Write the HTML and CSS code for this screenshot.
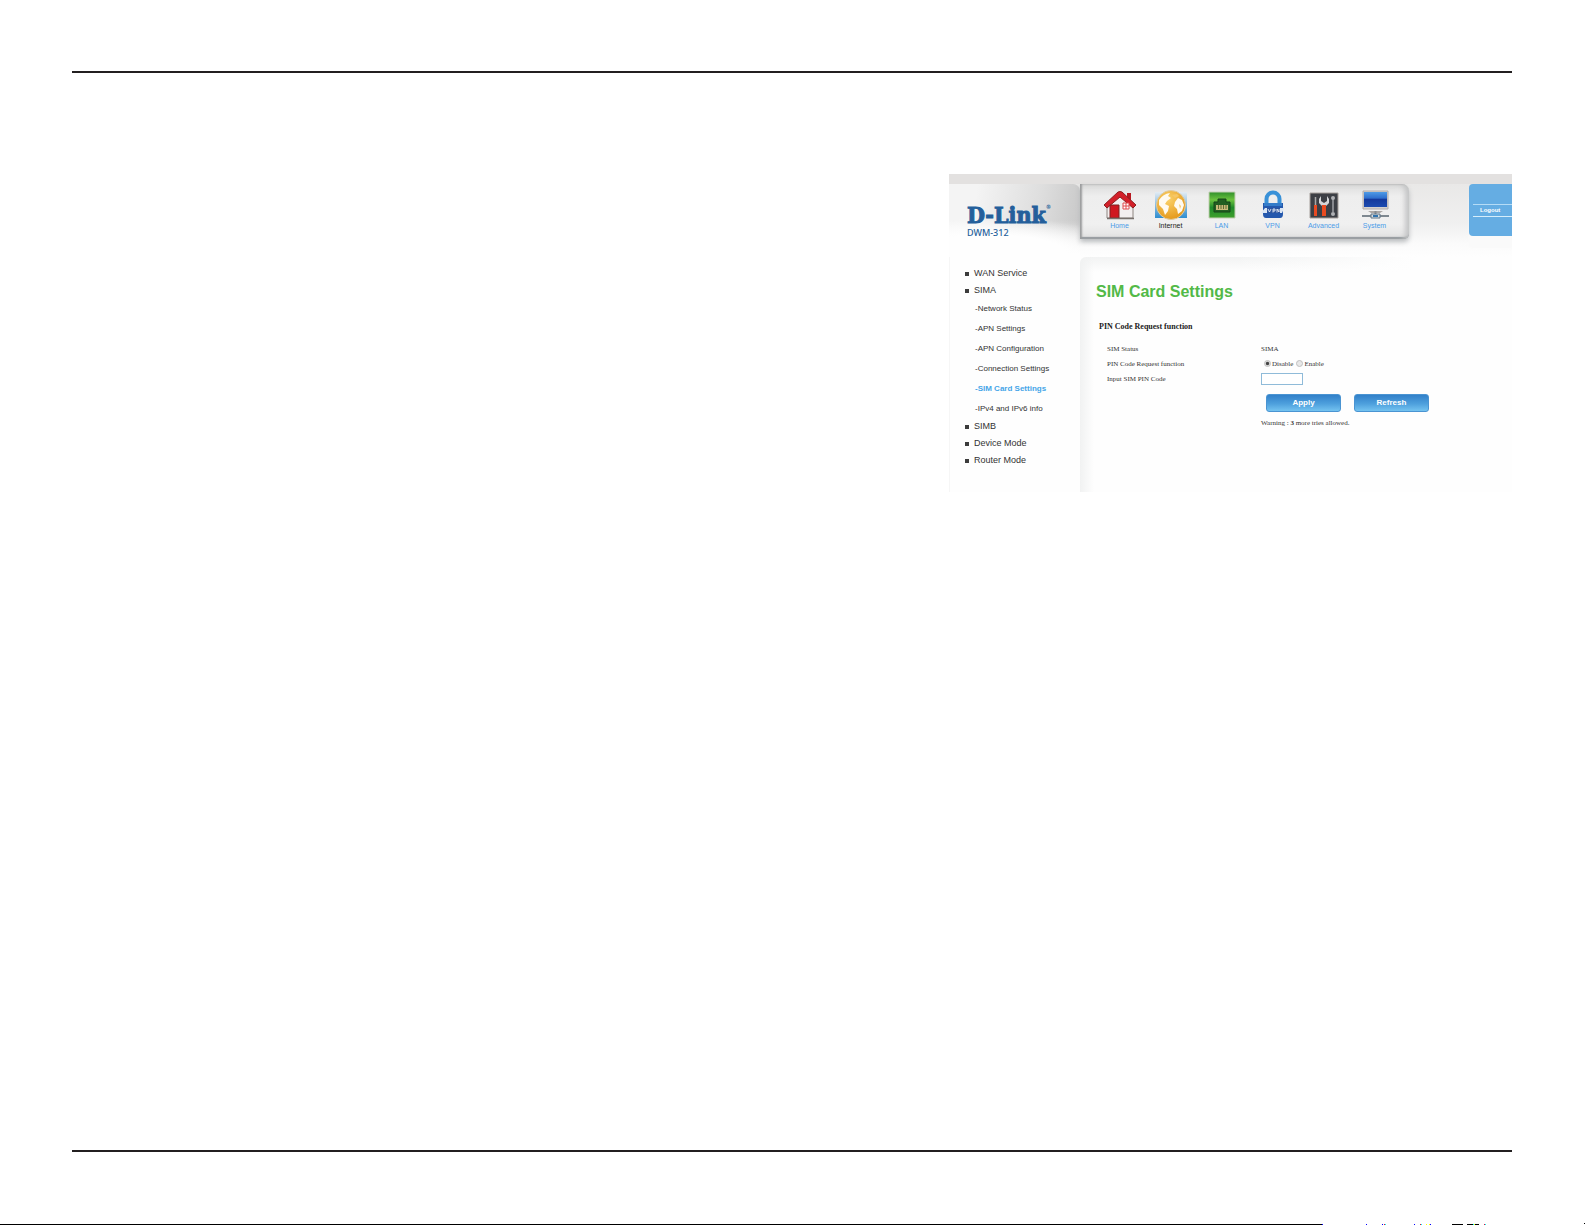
FILE: index.html
```
<!DOCTYPE html>
<html lang="en">
<head>
  <meta charset="UTF-8">
  <meta name="viewport" content="width=device-width, initial-scale=1.0">
  <title>D-Link DWM-312 - SIM Card Settings</title>
  <link rel="stylesheet" href="styles.css">
</head>
<body>
  <div class="page">
    <hr class="rule">

    <main class="sheet">
      <section class="console">
        <header class="header">
          <div class="brand">
            <div class="logo">D-Link<sup>®</sup></div>
            <div class="model">DWM-312</div>
          </div>

          <nav class="topnav">
            <a href="#home">
              <svg viewBox="0 0 34 30">
                <path d="M4 15L17 4l13 11v13H4z" fill="#f3efef" stroke="#8d8580" stroke-width="1"/>
                <path d="M24 3h4v8l-4-3z" fill="#b81820"/>
                <path d="M1 15L15 2q2-1 4 0l14 13-3 3L17 7 4 18z" fill="#d3202a" stroke="#8b2020" stroke-width="1"/>
                <path d="M7 15h9v13H7z" fill="#cf1720" stroke="#7c2222"/>
                <path d="M20 13h6v6h-6zM23 13v6M20 16h6" fill="#fff" stroke="#e04a4e"/>
                <path d="M4 28.500h27" stroke="#77706c" stroke-width="1.500"/>
              </svg>
              Home
            </a>
            <a href="#internet" class="current">
              <svg viewBox="0 0 34 30">
                <defs>
                  <linearGradient id="sky" x1="0" y1="0" x2="0" y2="1">
                    <stop offset="0" stop-color="#e4ecf3"/>
                    <stop offset="1" stop-color="#2f8ed0"/>
                  </linearGradient>
                  <radialGradient id="sea" cx=".4" cy=".3" r=".7">
                    <stop offset="0" stop-color="#fbd26a"/>
                    <stop offset="1" stop-color="#e59a1d"/>
                  </radialGradient>
                </defs>
                <path d="M1 2h32v26H1z" fill="url(#sky)"/>
                <circle cx="17" cy="15" r="14.500" fill="url(#sea)" stroke="#dfcba2"/>
                <path d="M5 10q4-6 11-7l-2 3 3 2-4 3-2 3 4 2-1 5-3 4-2-6-4-4zM21 12l3-4 4 2 2 5-2 6-4 3-1-5-3-3z" fill="#fffaf0"/>
                <path d="M18 5l5-1 2 2-4 2zM25 14l2 2-1 3z" fill="#f7c765"/>
              </svg>
              Internet
            </a>
            <a href="#lan">
              <svg viewBox="0 0 34 30">
                <defs>
                  <linearGradient id="port" x1="0" y1="0" x2="0" y2="1">
                    <stop offset="0" stop-color="#2f8f2a"/>
                    <stop offset=".3" stop-color="#6cc23f"/>
                    <stop offset=".6" stop-color="#1f8a2a"/>
                    <stop offset="1" stop-color="#3fa02c"/>
                  </linearGradient>
                </defs>
                <path d="M4 2h26v26H4z" fill="url(#port)" stroke="#c4cfb4"/>
                <path d="M9 22V12h4V9h8v3h4v10z" fill="#235f22" stroke="#174419"/>
                <path d="M11 15h12v5H11z" fill="#c9ba7a"/>
                <path d="M13.500 15v4M16 15v4M18.500 15v4M21 15v4" stroke="#4a5a24" stroke-width=".8"/>
              </svg>
              LAN
            </a>
            <a href="#vpn">
              <svg viewBox="0 0 34 30">
                <path d="M10.500 14V9a6.500 6.500 0 0 1 13 0v5" fill="none" stroke="#3991d8" stroke-width="4"/>
                <path d="M7 13h20v11q0 4-3 4H10q-3 0-3-4z" fill="#2458ad"/>
                <path d="M8 13h18v3H8z" fill="#347cc9"/>
                <path d="M5 23l4-5h18l2-2-3 7H8z" fill="#dbe6f4"/>
                <path d="M11 18h13v5H11z" fill="#2b55a0"/>
                <path d="M12 19l1.500 3 1.500-3M17 22.500V19h2v2h-2M21 22.500V19l2 3v-3" fill="none" stroke="#fff" stroke-width=".8"/>
              </svg>
              VPN
            </a>
            <a href="#advanced">
              <svg viewBox="0 0 34 30">
                <path d="M3 3h28v25H3z" fill="#3c3f45" stroke="#a6a09c"/>
                <path d="M8.500 7v9" stroke="#a8a8a8" stroke-width="1.500"/>
                <path d="M7 15h3v11H7z" fill="#e84a22"/>
                <path d="M14 6v5l3 2 3-2V6l2 3v4l-3 3h-4l-3-3V9z" fill="#d4d6d8"/>
                <path d="M15 15h4v11h-4z" fill="#ea4b20"/>
                <path d="M26 9v13" stroke="#9fa2a6" stroke-width="1.500"/>
                <circle cx="26" cy="8" r="2" fill="#b0b2b5"/>
                <circle cx="26" cy="24" r="2" fill="#b0b2b5"/>
              </svg>
              Advanced
            </a>
            <a href="#system">
              <svg viewBox="0 0 34 30">
                <defs>
                  <linearGradient id="screen" x1="0" y1="0" x2="0" y2="1">
                    <stop offset="0" stop-color="#4f9be6"/>
                    <stop offset=".4" stop-color="#2f6fce"/>
                    <stop offset=".5" stop-color="#15399c"/>
                    <stop offset="1" stop-color="#1d4bb0"/>
                  </linearGradient>
                </defs>
                <path d="M5 1h25v18H5z" fill="#d3d1cf" stroke="#b5adaa"/>
                <path d="M6 2h23v15H6z" fill="url(#screen)"/>
                <path d="M10 21h15l-3 2h-9z" fill="#aaa6a4"/>
                <path d="M17.500 21v4" stroke="#858a90" stroke-width="2"/>
                <path d="M4 25h27v2H4z" fill="#7e8890"/>
                <path d="M13 24h9v4h-9z" fill="#d7dde0" stroke="#5e7383"/>
                <path d="M15 26h5" stroke="#3173ad" stroke-width="2"/>
              </svg>
              System
            </a>
          </nav>

          <div class="session">
            <a href="#logout">Logout</a>
          </div>
        </header>

        <div class="body">
          <ul class="menu">
            <li><a href="#wan">WAN Service</a></li>
            <li>
              <a href="#sima">SIMA</a>
              <ul class="submenu">
                <li><a href="#network">-Network Status</a></li>
                <li><a href="#apn">-APN Settings</a></li>
                <li><a href="#apn-config">-APN Configuration</a></li>
                <li><a href="#connection">-Connection Settings</a></li>
                <li><a href="#sim" class="active">-SIM Card Settings</a></li>
                <li><a href="#ip">-IPv4 and IPv6 info</a></li>
              </ul>
            </li>
            <li><a href="#simb">SIMB</a></li>
            <li><a href="#device">Device Mode</a></li>
            <li><a href="#router">Router Mode</a></li>
          </ul>

          <div class="content">
            <h1>SIM Card Settings</h1>
            <h2>PIN Code Request function</h2>
            <form class="settings">
              <span>SIM Status</span>
              <span>SIMA</span>

              <span id="pin-label">PIN Code Request function</span>
              <div class="choices" role="radiogroup" aria-labelledby="pin-label">
                <input type="radio" name="pin" id="disable" checked>
                <label for="disable">Disable</label>
                <input type="radio" name="pin" id="enable">
                <label for="enable">Enable</label>
              </div>

              <label for="code">Input SIM PIN Code</label>
              <input type="text" id="code">

              <div class="actions">
                <button type="button">Apply</button>
                <button type="button">Refresh</button>
              </div>
              <p class="warning">Warning : <b>3</b> more tries allowed.</p>
            </form>
          </div>
        </div>
      </section>
    </main>

    <hr class="rule">
  </div>

  <!-- top edge of the next page -->
  <svg class="edge" viewBox="0 0 1585 2" preserveAspectRatio="none" shape-rendering="crispEdges">
    <path d="M0 1h1322v1H0zM1452 1h11v1h-11zM1467 1h12v1h-12zM1584 0h1v1h-1z" fill="#000"/>
    <path d="M1322 1h1v1h-1zM1366 1h1v1h-1zM1382 1h1v1h-1zM1414 1h1v1h-1zM1430 1h1v1h-1z" fill="#00f"/>
    <path d="M1384 1h1v1h-1zM1420 1h1v1h-1zM1484 1h1v1h-1z" fill="#e0103a"/>
    <path d="M1385 1h1v1h-1zM1421 1h1v1h-1zM1485 1h1v1h-1zM1473 1h1v1h-1z" fill="#0ff"/>
    <path d="M1426 1h1v1h-1zM1429 1h1v1h-1zM1474 1h1v1h-1z" fill="#ff0"/>
  </svg>
</body>
</html>
```
FILE: styles.css
```
:root {
  --link-color: #4a9be8;
  --brand-color: #245f9b;
  --title-color: #52b947;
  --text-color: #333333;
}

* {
  box-sizing: border-box;
}

body {
  margin: 0;
  min-height: 100vh;
  display: flex;
  flex-direction: column;
  background-color: #ffffff;
  color: var(--text-color);
  font-family: "Liberation Sans", Arial, sans-serif;
}

a {
  color: inherit;
  text-decoration: none;
}

ul {
  list-style: none;
  margin: 0;
  padding: 0;
}

.page {
  flex: 1;
  display: flex;
  flex-direction: column;
  padding: 71px 73px 71px 72px;
}

.rule {
  width: 100%;
  height: 2px;
  margin: 0;
  border: none;
  background-color: #231f20;
}

.sheet {
  flex: 1;
  display: flex;
  justify-content: flex-end;
  align-items: flex-start;
  padding-top: 101px;
}

.edge {
  display: block;
  width: 100%;
  height: 2px;
}

.console {
  width: 563px;
  overflow: hidden;
  background-color: #fefefe;
}

/* Header */
.header {
  display: flex;
  align-items: flex-start;
  height: 83px;
  border-top: 10px solid #e3e1e0;
  background: linear-gradient(#e9e8e7, #f0f0f0 40px, #fbfbfb 60px, #fefefe);
}

.brand {
  width: 131px;
  height: 73px;
  padding: 18px 0 0 18px;
  border-top-right-radius: 7px;
  color: var(--brand-color);
  background:
    radial-gradient(ellipse 150px 34px at 40px 68px, #fefefe 50%, rgba(254, 254, 254, 0)),
    linear-gradient(rgba(254, 254, 254, 0) 36px, #fefefe 70px),
    linear-gradient(100deg, #f4f4f4 20%, #dedede 65%, #c6c6c6);
}

.logo {
  display: flex;
  font-family: "DejaVu Serif Condensed", "DejaVu Serif", serif;
  font-size: 23px;
  font-weight: bold;
  line-height: 25px;
  -webkit-text-stroke: 1px var(--brand-color);
  paint-order: stroke fill;
}

.logo sup {
  font-size: 6px;
  line-height: 10px;
  -webkit-text-stroke: 0;
}

.model {
  font-family: "Noto Sans", sans-serif;
  font-size: 9px;
  font-weight: 500;
  line-height: 12px;
}

.topnav {
  display: flex;
  width: 329px;
  height: 55px;
  padding: 6px 0 0 14px;
  border-radius: 0 7px 5px 0;
  background: linear-gradient(#dcdcdb, #eeeeee 12px, #f0f0f0 40px, #e2e2e2);
  box-shadow:
    inset 2px 0 2px #9b9c9e,
    inset -4px 0 5px #c4c5c6,
    inset 0 -2px 1px #7f888e,
    0 3px 5px #b9bcbe;
}

.topnav a {
  flex: 0 0 51px;
  display: flex;
  flex-direction: column;
  align-items: center;
  color: var(--link-color);
  font-size: 7px;
  line-height: 12px;
}

.topnav .current {
  color: #222222;
}

.topnav svg {
  width: 34px;
  height: 30px;
}

.session {
  width: 43px;
  height: 52px;
  margin-left: auto;
  padding-top: 20px;
  border-radius: 4px 0 0 4px;
  background-color: #65ade3;
  box-shadow: 0 12px 2px #fafafa;
}

.session a {
  display: block;
  margin-left: 4px;
  padding-left: 7px;
  border-top: 1px solid #b5dcf6;
  border-bottom: 1px solid #d5edfb;
  color: #ffffff;
  font-size: 6px;
  font-weight: bold;
  line-height: 11px;
}

/* Side menu and content */
.body {
  display: flex;
  height: 235px;
}

.menu {
  width: 131px;
  padding: 8px 0 0 15px;
  border-left: 1px solid #f6f6f6;
  font-size: 9px;
  line-height: 17px;
}

.menu > li > a {
  display: flex;
  align-items: center;
  gap: 5px;
}

.menu > li > a::before {
  content: "";
  width: 4px;
  height: 4px;
  background-color: #3c3c3c;
}

.submenu {
  display: grid;
  gap: 1px;
  padding-left: 10px;
  font-size: 8px;
  line-height: 19px;
}

.submenu .active {
  color: #45a5e8;
  font-weight: bold;
}

.content {
  flex: 1;
  padding: 25px 0 0 16px;
  border-top-left-radius: 6px;
  background:
    linear-gradient(90deg, #f1f2f2, rgba(254, 254, 254, 0) 14px),
    linear-gradient(100deg, rgba(254, 254, 254, 0) 150px, #fefefe 330px),
    linear-gradient(#f2f3f3, #fefefe 15px);
}

h1 {
  margin: 0;
  color: var(--title-color);
  font-size: 16px;
  line-height: 20px;
}

h2 {
  margin: 20px 0 9px 3px;
  color: #222222;
  font-family: "Liberation Serif", serif;
  font-size: 8px;
  line-height: 10px;
}

.settings {
  display: grid;
  grid-template-columns: 154px 1fr;
  grid-template-rows: 15px 15px 15px;
  align-items: center;
  margin-left: 11px;
  font-family: "Liberation Serif", serif;
  font-size: 7px;
}

.choices {
  display: flex;
  align-items: center;
}

.choices input {
  appearance: none;
  width: 7px;
  height: 7px;
  margin: 0 1px 0 3px;
  border: 1px solid #c0c0c0;
  border-radius: 50%;
  background-color: #e8e8e8;
}

.choices input:checked {
  background: radial-gradient(#444444 35%, #e0e0e0 60%);
}

#code {
  width: 42px;
  height: 12px;
  padding: 0 2px;
  border: 1px solid #8fbbd9;
  background-color: #ffffff;
  font-size: 7px;
}

.actions {
  grid-column: 2;
  display: flex;
  gap: 13px;
  padding: 8px 0 6px 5px;
}

button {
  width: 75px;
  height: 18px;
  padding: 0;
  border: 1px solid #4a94d2;
  border-radius: 3px;
  background: linear-gradient(#3180c9, #4ea0dd 55%, #74c3f0);
  color: #ffffff;
  font-family: "Liberation Sans", Arial, sans-serif;
  font-size: 8px;
  font-weight: bold;
  line-height: 16px;
  cursor: pointer;
}

.warning {
  grid-column: 2;
  margin: 0;
  line-height: 10px;
}
```
